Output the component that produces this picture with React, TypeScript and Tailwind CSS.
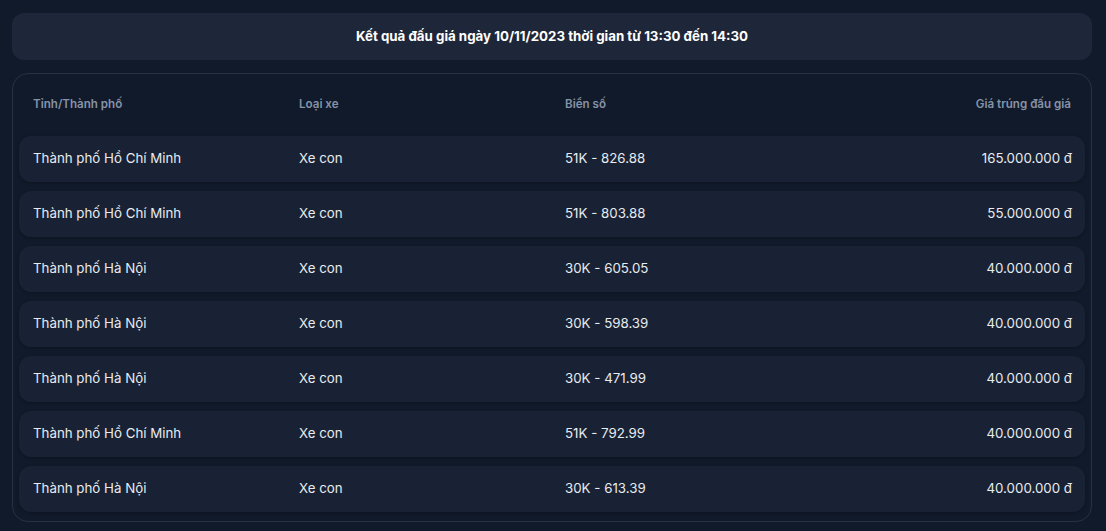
import React from "react";

type Row = { province: string; type: string; plate: string; price: string };

const rows: Row[] = [
  { province: "Thành phố Hồ Chí Minh", type: "Xe con", plate: "51K - 826.88", price: "165.000.000 đ" },
  { province: "Thành phố Hồ Chí Minh", type: "Xe con", plate: "51K - 803.88", price: "55.000.000 đ" },
  { province: "Thành phố Hà Nội", type: "Xe con", plate: "30K - 605.05", price: "40.000.000 đ" },
  { province: "Thành phố Hà Nội", type: "Xe con", plate: "30K - 598.39", price: "40.000.000 đ" },
  { province: "Thành phố Hà Nội", type: "Xe con", plate: "30K - 471.99", price: "40.000.000 đ" },
  { province: "Thành phố Hồ Chí Minh", type: "Xe con", plate: "51K - 792.99", price: "40.000.000 đ" },
  { province: "Thành phố Hà Nội", type: "Xe con", plate: "30K - 613.39", price: "40.000.000 đ" },
];

const cols = "grid grid-cols-[266px_266px_1fr_auto] items-center";

export default function App() {
  return (
    <div className="min-h-screen bg-[#111a2a] pl-3 pr-[14px] pt-[13px] pb-2 font-['Inter',sans-serif]">
      {/* Title bar */}
      <div className="h-[47px] rounded-xl bg-[#1e2739] flex items-center justify-center">
        <h1 className="text-[13.3px] font-bold text-white">
          Kết quả đấu giá ngày 10/11/2023 thời gian từ 13:30 đến 14:30
        </h1>
      </div>

      {/* Results table */}
      <div className="mt-[13px] rounded-2xl border border-[#263144] px-[6px] pb-[9px]">
        <div className={`${cols} px-[14px] pt-[22px] pb-[23px] text-[11.6px] font-semibold text-[#8593a8]`}>
          <span>Tỉnh/Thành phố</span>
          <span>Loại xe</span>
          <span>Biển số</span>
          <span className="text-right">Giá trúng đấu giá</span>
        </div>
        <div className="flex flex-col gap-[9px]">
          {rows.map((r, i) => (
            <div
              key={i}
              className={`${cols} h-[46px] pl-[14px] pr-[13px] rounded-xl bg-[#192234] shadow-[0_1px_3px_rgba(0,0,0,0.25)] text-[13.3px] text-[#e8ebf0]`}
            >
              <span>{r.province}</span>
              <span>{r.type}</span>
              <span>{r.plate}</span>
              <span className="text-right">{r.price}</span>
            </div>
          ))}
        </div>
      </div>
    </div>
  );
}
